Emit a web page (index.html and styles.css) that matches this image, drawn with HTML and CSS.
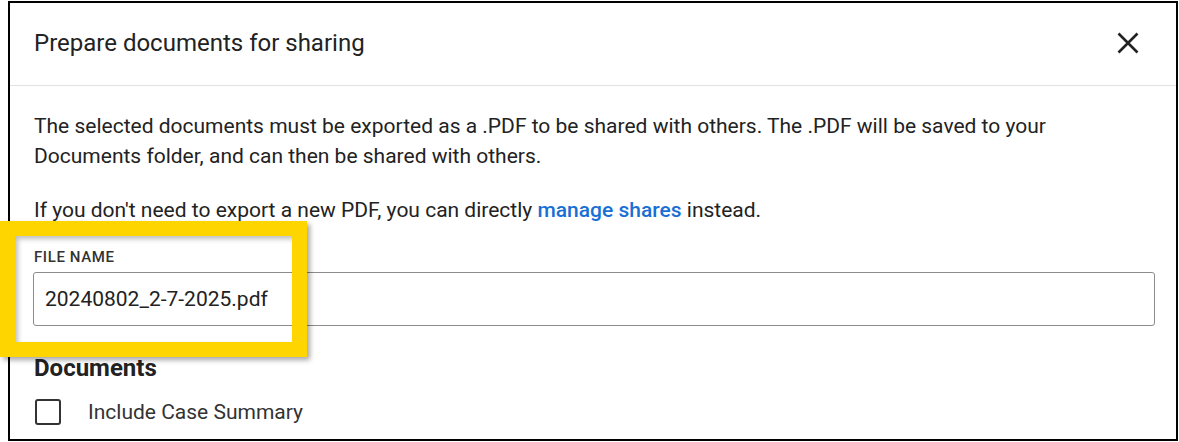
FILE: index.html
```html
<!DOCTYPE html>
<html lang="en">
<head>
<meta charset="utf-8">
<title>Prepare documents for sharing</title>
<link rel="stylesheet" href="styles.css">
</head>
<body>
<div class="dialog">
  <div class="dialog-header">
    <h1 class="dialog-title">Prepare documents for sharing</h1>
    <button class="close-btn" aria-label="Close">
      <svg width="24" height="24" viewBox="0 0 24 24"><path d="M2.5 2.5 L21.5 21.5 M21.5 2.5 L2.5 21.5" stroke="#222" stroke-width="2.6" fill="none"/></svg>
    </button>
  </div>
  <div class="dialog-body">
    <p class="para first">The selected documents must be exported as a .PDF to be shared with others. The .PDF will be saved to your Documents folder, and can then be shared with others.</p>
    <p class="para second">If you don't need to export a new PDF, you can directly <a class="link" href="#">manage shares</a> instead.</p>
    <label class="field-label">FILE NAME</label>
    <div class="text-input">20240802_2-7-2025.pdf</div>
    <h2 class="section-title">Documents</h2>
    <div class="check-row">
      <span class="checkbox"></span>
      <span class="check-label">Include Case Summary</span>
    </div>
  </div>
</div>
<div class="highlight"></div>
</body>
</html>
```
FILE: styles.css
```css
html, body {
  margin: 0;
  padding: 0;
  background: #fff;
}
body {
  font-family: Roboto, "Liberation Sans", Arial, sans-serif;
  color: #222;
  position: relative;
  width: 1179px;
  height: 442px;
  overflow: hidden;
}
.dialog {
  box-sizing: border-box;
  margin: 1px 0 0 8px;
  width: 1170px;
  height: 440px;
  border: 2px solid #000;
  overflow: hidden;
}
.dialog-header {
  box-sizing: border-box;
  height: 83px;
  border-bottom: 1px solid #e2e2e2;
  display: flex;
  align-items: center;
  justify-content: space-between;
  padding: 0 36px 0 24px;
}
.dialog-title {
  margin: 0;
  font-size: 24px;
  font-weight: 400;
  color: #222;
  padding-bottom: 2px;
}
.close-btn {
  border: 0;
  background: none;
  padding: 0;
  width: 24px;
  height: 24px;
  margin-bottom: 2px;
}
.close-btn svg { display: block; }
.dialog-body {
  padding: 0 21px 0 23px;
}
.para {
  margin: 0;
  font-size: 21px;
  line-height: 30px;
  color: #222;
  padding-left: 1px;
  padding-right: 100px;
}
.para.first { margin-top: 25px; }
.para.second { margin-top: 24px; }
.link {
  color: #1a6fd4;
  font-weight: 500;
  text-decoration: none;
}
.field-label {
  display: block;
  margin-top: 24px;
  font-size: 15px;
  line-height: 16px;
  font-weight: 500;
  letter-spacing: 0.6px;
  color: #333;
  padding-left: 1px;
}
.text-input {
  box-sizing: border-box;
  margin-top: 7px;
  height: 54px;
  border: 1px solid #8c8c8c;
  border-radius: 3px;
  padding: 0 11px;
  display: flex;
  align-items: center;
  font-size: 21px;
  color: #222;
}
.section-title {
  margin: 29px 0 0;
  font-size: 24px;
  line-height: 26px;
  font-weight: 700;
  color: #222;
  padding-left: 1px;
}
.check-row {
  margin-top: 18px;
  display: flex;
  align-items: center;
  height: 26px;
}
.checkbox {
  box-sizing: border-box;
  width: 26px;
  height: 26px;
  margin-left: 2px;
  border: 2.5px solid #333;
  border-radius: 3px;
}
.check-label {
  margin-left: 27px;
  font-size: 21px;
  color: #333;
}
.highlight {
  position: absolute;
  left: 0;
  top: 221px;
  width: 307px;
  height: 136px;
  box-sizing: border-box;
  border: 15px solid #ffd500;
  box-shadow: 3px 3px 5px rgba(0,0,0,0.35), inset 3px 3px 5px rgba(0,0,0,0.25);
  pointer-events: none;
}
```
